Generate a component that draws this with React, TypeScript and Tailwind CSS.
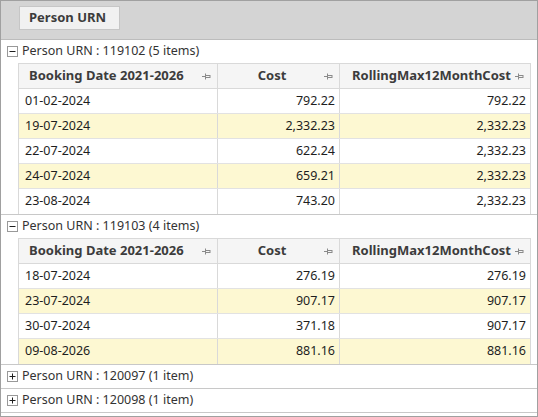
import React from "react";

type Row = { date: string; cost: string; max: string };

type Group = { urn: string; count: string; rows: Row[] };

const groups: Group[] = [
  {
    urn: "119102",
    count: "5 items",
    rows: [
      { date: "01-02-2024", cost: "792.22", max: "792.22" },
      { date: "19-07-2024", cost: "2,332.23", max: "2,332.23" },
      { date: "22-07-2024", cost: "622.24", max: "2,332.23" },
      { date: "24-07-2024", cost: "659.21", max: "2,332.23" },
      { date: "23-08-2024", cost: "743.20", max: "2,332.23" },
    ],
  },
  {
    urn: "119103",
    count: "4 items",
    rows: [
      { date: "18-07-2024", cost: "276.19", max: "276.19" },
      { date: "23-07-2024", cost: "907.17", max: "907.17" },
      { date: "30-07-2024", cost: "371.18", max: "907.17" },
      { date: "09-08-2026", cost: "881.16", max: "881.16" },
    ],
  },
  { urn: "120097", count: "1 item", rows: [] },
  { urn: "120098", count: "1 item", rows: [] },
];

function PinIcon() {
  return (
    <svg width="9" height="7" viewBox="0 0 9 7" className="shrink-0">
      <path d="M0 3.5H3.5M3.5 0.5V6.5M3.5 2.5H8M3.5 4.5H8M8 2V5" stroke="#8a8a8a" strokeWidth="1" fill="none" />
    </svg>
  );
}

function ExpandBox({ open }: { open: boolean }) {
  return (
    <svg width="11" height="11" viewBox="0 0 11 11" className="shrink-0">
      <rect x="0.5" y="0.5" width="10" height="10" fill="#ffffff" stroke="#999999" />
      <path d="M2.5 5.5H8.5" stroke="#1e1e1e" />
      {!open && <path d="M5.5 2.5V8.5" stroke="#1e1e1e" />}
    </svg>
  );
}

function HeaderCell({ label, w, pad, center, last }: { label: string; w: string; pad: string; center?: boolean; last?: boolean }) {
  return (
    <div
      className={`${w} ${pad} h-full flex items-center pr-[6px] bg-[#f5f5f5] ${
        last ? "" : "border-r border-[#d9d9d9]"
      }`}
    >
      <span className={`font-bold text-[13px] text-[#3c3c3c] flex-1 ${center ? "text-center" : ""}`}>{label}</span>
      <PinIcon />
    </div>
  );
}

export default function App() {
  return (
    <div
      className="w-[538px] h-[417px] border border-[#a0a0a0] bg-white overflow-hidden flex flex-col text-[12.5px] text-[#1e1e1e]"
      style={{ fontFamily: '"Noto Sans", "Open Sans", sans-serif' }}
    >
      {/* GROUP PANEL */}
      <div className="h-[39px] shrink-0 bg-[#d4d4d4] border-b border-[#bcbcbc] pl-[18px] pt-[5px]">
        <div className="w-[101px] h-[24px] bg-[#f1f1f1] border border-[#c6c6c6] flex items-center pl-[9px] font-bold text-[13px] text-[#3c3c3c]">
          Person URN
        </div>
      </div>

      {/* GROUPS */}
      {groups.map((g) => {
        const open = g.rows.length > 0;
        return (
          <div key={g.urn} className="border-b border-[#c8c8c8]">
            <div className="h-[23px] flex items-center pl-[6px] gap-[4px] text-[#333]">
              <ExpandBox open={open} />
              <span>
                Person URN : {g.urn} ({g.count})
              </span>
            </div>

            {open && (
              <div className="ml-[17px] w-[513px] border-l border-r border-t border-[#d9d9d9]">
                <div className="h-[25px] flex border-b border-[#d9d9d9]">
                  <HeaderCell label="Booking Date 2021-2026" w="w-[199px]" pad="pl-[10px]" />
                  <HeaderCell label="Cost" w="w-[122px]" pad="pl-[2px]" center />
                  <HeaderCell label="RollingMax12MonthCost" w="flex-1" pad="pl-[8px]" center last />
                </div>
                {g.rows.map((r, i) => (
                  <div
                    key={r.date + i}
                    className={`h-[25px] flex ${i % 2 === 1 ? "bg-[#fdf8d2]" : "bg-white"} ${
                      i < g.rows.length - 1 ? "border-b border-[#e2e2e2]" : ""
                    }`}
                  >
                    <div className="w-[199px] flex items-center pl-[6px] border-r border-[#d9d9d9]">{r.date}</div>
                    <div className="w-[122px] flex items-center justify-end pr-[4px] border-r border-[#d9d9d9]">
                      {r.cost}
                    </div>
                    <div className="flex-1 flex items-center justify-end pr-[4px]">{r.max}</div>
                  </div>
                ))}
              </div>
            )}
          </div>
        );
      })}
    </div>
  );
}
